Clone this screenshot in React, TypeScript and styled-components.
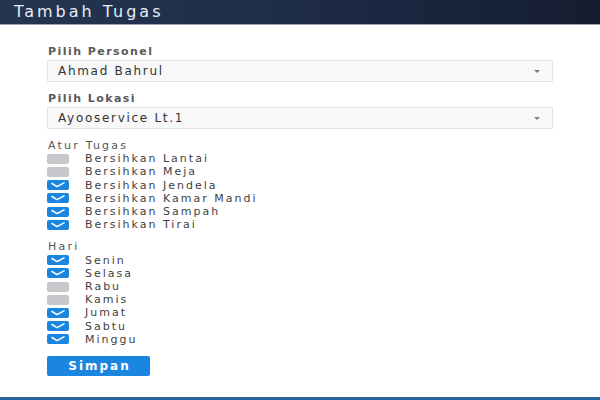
import React from "react";
import styled, { createGlobalStyle } from "styled-components";

const Global = createGlobalStyle`
  html, body { margin: 0; padding: 0; background: #ffffff; }
  body { font-family: "DejaVu Sans", "Liberation Sans", sans-serif; }
  * { box-sizing: border-box; }
`;

const Modal = styled.div`
  width: 600px;
  height: 400px;
  display: flex;
  flex-direction: column;
  background: #ffffff;
  overflow: hidden;
`;

const Header = styled.div`
  height: 25px;
  flex: 0 0 25px;
  background: linear-gradient(90deg, #243551 0%, #1e2d4a 45%, #151d30 100%);
  border-bottom: 1px solid #9aa3b1;
  display: flex;
  align-items: center;
  padding-left: 14px;
`;

const Title = styled.h1`
  margin: 0;
  font-size: 16px;
  font-weight: normal;
  letter-spacing: 3px;
  color: #e9edf3;
  line-height: 24px;
`;

const Body = styled.form`
  flex: 1;
  display: flex;
  flex-direction: column;
  padding: 20px 47px 0 47px;
`;

const Field = styled.div`
  display: flex;
  flex-direction: column;
  gap: 1px;
  margin-bottom: 10px;
`;

const Label = styled.label`
  font-size: 11px;
  font-weight: bold;
  letter-spacing: 1.45px;
  color: #5a5a5a;
  line-height: 14px;
  padding-left: 1px;
`;

const Select = styled.div`
  height: 22px;
  border: 1px solid #e1e3e8;
  background: #f8f8f9;
  border-radius: 1px;
  display: flex;
  align-items: center;
  justify-content: space-between;
  padding: 0 12px 0 10px;
  font-size: 12px;
  letter-spacing: 1.7px;
  color: #333333;
`;

const Caret = styled.span`
  width: 0;
  height: 0;
  border-left: 3.5px solid transparent;
  border-right: 3.5px solid transparent;
  border-top: 3px solid #7d7d7d;
  margin-top: 1px;
`;

const Section = styled.div<{ $gap: number }>`
  display: flex;
  flex-direction: column;
  margin-bottom: ${(p) => p.$gap}px;
`;

const SectionTitle = styled.div`
  font-size: 11px;
  letter-spacing: 2.2px;
  color: #555555;
  line-height: 13.2px;
  padding-left: 1px;
`;

const Row = styled.label`
  display: flex;
  align-items: center;
  height: 13.2px;
  font-size: 11px;
  letter-spacing: 2px;
  color: #3f3f3f;
`;

const Box = styled.span<{ $on: boolean }>`
  width: 22px;
  height: 10px;
  border-radius: 2px;
  background: ${(p) => (p.$on ? "#1a86e0" : "#c6c8cb")};
  display: inline-flex;
  align-items: center;
  justify-content: center;
  margin-right: 16px;
  flex: 0 0 22px;
`;

const Button = styled.button`
  width: 103px;
  height: 20px;
  border: none;
  border-radius: 2px;
  background: #1a86e0;
  color: #ffffff;
  font-family: "DejaVu Sans", "Liberation Sans", sans-serif;
  font-size: 12px;
  font-weight: bold;
  letter-spacing: 2px;
  padding: 0 0 0 2px;
  cursor: pointer;
`;

const Footer = styled.div`
  height: 3px;
  flex: 0 0 3px;
  background: #2a659c;
`;

const Check = () => (
  <svg width="14" height="6" viewBox="0 0 14 6">
    <polyline
      points="1,1.5 6,4.6 13,0.8"
      fill="none"
      stroke="#ffffff"
      strokeWidth="1.5"
      strokeLinejoin="round"
      strokeLinecap="round"
    />
  </svg>
);

const tasks = [
  { name: "Bersihkan Lantai", on: false },
  { name: "Bersihkan Meja", on: false },
  { name: "Bersihkan Jendela", on: true },
  { name: "Bersihkan Kamar Mandi", on: true },
  { name: "Bersihkan Sampah", on: true },
  { name: "Bersihkan Tirai", on: true },
];

const days = [
  { name: "Senin", on: true },
  { name: "Selasa", on: true },
  { name: "Rabu", on: false },
  { name: "Kamis", on: false },
  { name: "Jumat", on: true },
  { name: "Sabtu", on: true },
  { name: "Minggu", on: true },
];

export default function App() {
  return (
    <>
      <Global />
      <Modal>
        <Header>
          <Title>Tambah Tugas</Title>
        </Header>
        <Body onSubmit={(e) => e.preventDefault()}>
          <Field>
            <Label>Pilih Personel</Label>
            <Select>
              <span>Ahmad Bahrul</span>
              <Caret />
            </Select>
          </Field>
          <Field>
            <Label>Pilih Lokasi</Label>
            <Select>
              <span>Ayooservice Lt.1</span>
              <Caret />
            </Select>
          </Field>
          <Section $gap={9}>
            <SectionTitle>Atur Tugas</SectionTitle>
            {tasks.map((t) => (
              <Row key={t.name}>
                <Box $on={t.on}>{t.on && <Check />}</Box>
                {t.name}
              </Row>
            ))}
          </Section>
          <Section $gap={9}>
            <SectionTitle>Hari</SectionTitle>
            {days.map((d) => (
              <Row key={d.name}>
                <Box $on={d.on}>{d.on && <Check />}</Box>
                {d.name}
              </Row>
            ))}
          </Section>
          <div>
            <Button type="submit">Simpan</Button>
          </div>
        </Body>
        <Footer />
      </Modal>
    </>
  );
}
